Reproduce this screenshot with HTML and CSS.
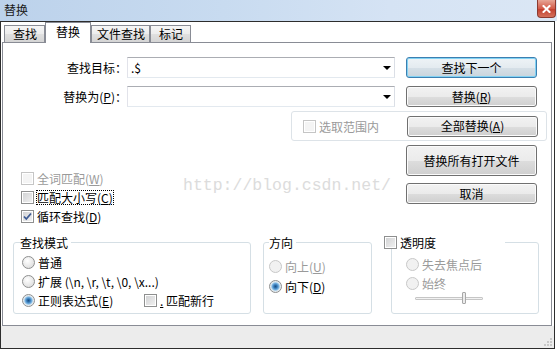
FILE: index.html
```html
<!DOCTYPE html>
<html lang="zh-CN">
<head>
    <meta charset="UTF-8">
    <meta name="viewport" content="width=device-width, initial-scale=1.0">
    <title>替换</title>
    <link rel="stylesheet" href="styles.css">
</head>
<body>
    <div class="window">
        <div class="titlebar">
            <span class="title">替换</span>
            <span class="close">
                <svg width="9" height="8" viewBox="0 0 9 8"><path d="M1.5 1 L7.5 7 M7.5 1 L1.5 7" stroke="#fff" stroke-width="2" stroke-linecap="square"/></svg>
            </span>
        </div>
        <div class="client">
            <div class="tabs">
                <div class="tab">查找</div>
                <div class="tab active">替换</div>
                <div class="tab wide">文件查找</div>
                <div class="tab">标记</div>
            </div>
            <div class="panel">
                <div class="watermark">http://blog.csdn.net/</div>

                <div class="row">
                    <label class="field-label">查找目标：</label>
                    <div class="combo"><span>.$</span><span class="arrow"></span></div>
                    <button class="btn default">查找下一个</button>
                </div>
                <div class="row last">
                    <label class="field-label">替换为(<u>P</u>)：</label>
                    <div class="combo"><span></span><span class="arrow"></span></div>
                    <button class="btn">替换(<u>R</u>)</button>
                </div>

                <div class="scope">
                    <span class="check disabled"><i class="box"></i>选取范围内</span>
                    <button class="btn">全部替换(<u>A</u>)</button>
                </div>

                <div class="middle">
                    <div class="options">
                        <div class="check disabled"><i class="box"></i>全词匹配(<u>W</u>)</div>
                        <div class="check"><i class="box"></i><span class="focus">匹配大小写(<u>C</u>)</span></div>
                        <div class="check">
                            <i class="box">
                                <svg width="11" height="11" viewBox="0 0 11 11"><path d="M2 5.5 L4.3 8 L9 2.5" fill="none" stroke="#3d5a93" stroke-width="1.8"/></svg>
                            </i>循环查找(<u>D</u>)
                        </div>
                    </div>
                    <div class="side">
                        <button class="btn tall">替换所有打开文件</button>
                        <button class="btn">取消</button>
                    </div>
                </div>

                <div class="groups">
                    <fieldset class="group mode">
                        <legend>查找模式</legend>
                        <div class="radio"><i class="dot"></i>普通</div>
                        <div class="radio"><i class="dot"></i>扩展 (\n, \r, \t, \0, \x...)</div>
                        <div class="radio-row">
                            <div class="radio regex"><i class="dot on"></i>正则表达式(<u>E</u>)</div>
                            <div class="check"><i class="box"></i><u>.</u>&nbsp;匹配新行</div>
                        </div>
                    </fieldset>
                    <fieldset class="group direction">
                        <legend>方向</legend>
                        <div class="radio disabled"><i class="dot"></i>向上(<u>U</u>)</div>
                        <div class="radio"><i class="dot on"></i>向下(<u>D</u>)</div>
                    </fieldset>
                    <fieldset class="group alpha">
                        <legend><span class="check"><i class="box"></i>透明度</span></legend>
                        <div class="radio disabled"><i class="dot"></i>失去焦点后</div>
                        <div class="radio disabled"><i class="dot"></i>始终</div>
                        <div class="slider"><span class="thumb"></span></div>
                    </fieldset>
                </div>
            </div>
            <div class="statusbar">
                <svg class="grip" width="10" height="10" viewBox="0 0 10 10">
                    <rect x="7" y="1" width="2" height="2" fill="#c8c8c8"/>
                    <rect x="4" y="4" width="2" height="2" fill="#c8c8c8"/>
                    <rect x="7" y="4" width="2" height="2" fill="#c8c8c8"/>
                    <rect x="1" y="7" width="2" height="2" fill="#c8c8c8"/>
                    <rect x="4" y="7" width="2" height="2" fill="#c8c8c8"/>
                    <rect x="7" y="7" width="2" height="2" fill="#c8c8c8"/>
                </svg>
            </div>
        </div>
    </div>
</body>
</html>
```

FILE: styles.css
```css
* {
    box-sizing: border-box;
}
body {
    margin: 0;
    background: #fff;
    font-family: "Noto Sans CJK SC", "Liberation Sans", sans-serif;
    font-size: 12px;
    color: #000;
}
u {
    text-decoration: underline;
}
.window {
    width: 557px;
    height: 351px;
}

/* title bar */
.titlebar {
    height: 21px;
    display: flex;
    justify-content: space-between;
    align-items: flex-start;
    background: linear-gradient(90deg, #bcd2eb 0%, #c8dbf0 40%, #d5e3f4 70%, #dbe7f5 100%);
}
.title {
    padding: 2px 0 0 4px;
    line-height: 16px;
    color: #1a1a1a;
}
.close {
    width: 19px;
    height: 18px;
    margin-right: 1px;
    border: 1px solid #8b3a30;
    border-top: none;
    border-radius: 0 0 4px 4px;
    background: linear-gradient(#e7a596, #d35a48 50%, #c13c2c 51%, #d4705a);
    display: flex;
    align-items: center;
    justify-content: center;
}

/* client area */
.client {
    width: 555px;
    height: 328px;
    border: 1px solid #2d2d2d;
    display: flex;
    flex-direction: column;
}
.tabs {
    display: flex;
    align-items: flex-end;
    height: 20px;
    padding-left: 3px;
}
.tab {
    height: 17px;
    padding: 0 7px 0 8px;
    line-height: 15px;
    border: 1px solid #898c95;
    border-bottom: none;
    background: linear-gradient(#f6f6f6, #ececec 50%, #e0e0e0 51%, #d4d4d4);
}
.tab.wide {
    padding: 0 4px 0 5px;
}
.tab.active {
    position: relative;
    z-index: 1;
    height: 21px;
    margin-bottom: -1px;
    padding: 0 10px;
    line-height: 18px;
    background: #fff;
}
.panel {
    position: relative;
    height: 284px;
    margin: 0 2px 0 1px;
    padding-top: 14px;
    border: 1px solid #898c95;
    background: #fff;
}
.statusbar {
    flex: 1;
    display: flex;
    justify-content: flex-end;
    align-items: flex-end;
    background: #ececec;
    padding: 0 1px 1px 0;
}
.watermark {
    position: absolute;
    left: 180px;
    top: 133px;
    font: 16.5px/19px "Liberation Mono", monospace;
    color: #dcdcdc;
    pointer-events: none;
}

/* fields */
.row {
    display: flex;
    align-items: center;
    height: 21px;
    margin-bottom: 8px;
}
.row.last {
    margin-bottom: 4px;
}
.field-label {
    width: 124px;
    text-align: right;
    line-height: 21px;
}
.combo {
    width: 268px;
    height: 21px;
    display: flex;
    align-items: center;
    justify-content: space-between;
    padding: 0 3px 0 3px;
    border: 1px solid;
    border-color: #abadb3 #dbdfe6 #e3e9ef #e2e3ea;
    line-height: 19px;
}
.arrow {
    width: 0;
    height: 0;
    border-left: 4px solid transparent;
    border-right: 4px solid transparent;
    border-top: 4px solid #000;
}

/* buttons */
.btn {
    width: 131px;
    height: 21px;
    margin-left: 11px;
    padding: 0;
    font: 12px/1 "Noto Sans CJK SC", "Liberation Sans", sans-serif;
    color: #000;
    border: 1px solid #707070;
    border-radius: 3px;
    background: linear-gradient(#f2f2f2, #ebebeb 50%, #dddddd 51%, #cfcfcf);
    box-shadow: inset 0 0 0 1px #fbfbfb;
}
.btn.default {
    border-color: #3c7fb1;
    background: linear-gradient(#eef3f6, #e4ebf0 50%, #d6e0e7 51%, #c9d4dc);
    box-shadow: inset 0 0 0 1px #82d2f3;
}
.btn.tall {
    height: 31px;
}

/* scope box */
.scope {
    display: flex;
    align-items: center;
    width: 256px;
    height: 30px;
    margin-left: 288px;
    padding: 0 8px 0 11px;
    border: 1px solid #dde3e8;
    border-radius: 3px;
}
.scope .btn {
    margin-left: auto;
}

/* check boxes and radios */
.check, .radio {
    display: flex;
    align-items: center;
    height: 19px;
    white-space: nowrap;
}
.disabled {
    color: #9a9a9a;
}
.box {
    flex: none;
    width: 13px;
    height: 13px;
    margin-right: 3px;
    display: flex;
    align-items: center;
    justify-content: center;
    border: 1px solid #8e8f8f;
    background: linear-gradient(135deg, #cfd0d2, #f3f3f3);
    box-shadow: inset 0 0 0 1px #fff;
}
.disabled .box {
    border-color: #c5c5c5;
    background: #f4f4f4;
}
.dot {
    flex: none;
    width: 13px;
    height: 13px;
    margin-right: 3px;
    border-radius: 50%;
    border: 1px solid #8e8f8f;
    background: radial-gradient(circle at 40% 35%, #fff, #d6d6d6);
}
.dot.on {
    background: radial-gradient(circle, #1d4f82 0, #2f72b0 1.5px, #7db8e6 3.5px, #d8e4ec 4.5px, #f6f6f6 6px);
}
.disabled .dot {
    border-color: #c8c8c8;
    background: #f1f1f1;
}
.focus {
    outline: 1px dotted #000;
    outline-offset: 0;
    line-height: 13px;
}

/* middle area */
.middle {
    display: flex;
    height: 85px;
}
.options {
    width: 403px;
    padding: 28px 0 0 18px;
}
.side {
    display: flex;
    flex-direction: column;
    gap: 7px;
    padding-top: 4px;
}
.side .btn {
    margin-left: 0;
}

/* group boxes */
.groups {
    display: flex;
    align-items: flex-start;
    margin: 10px 0 0 10px;
}
.group {
    margin: 0;
    height: 78px;
    padding: 4px 0 0 8px;
    border: 1px solid #d5dfe5;
    border-radius: 3px;
}
.group legend {
    padding: 0 3px 0 0;
    line-height: 13px;
}
.mode {
    width: 238px;
}
.mode legend {
    margin-left: -2px;
}
.radio-row {
    display: flex;
}
.regex {
    width: 122px;
}
.direction {
    width: 109px;
    margin-left: 12px;
    padding: 7px 0 0 5px;
}
.direction .radio {
    height: 20px;
}
.alpha {
    width: 148px;
    margin-left: 19px;
    padding: 6px 0 0 14px;
}
.alpha legend {
    width: 121px;
    margin-left: -22px;
}
.alpha legend .check {
    height: 13px;
}
.alpha .radio {
    height: 19px;
}
.slider {
    position: relative;
    width: 68px;
    height: 3px;
    margin: 4px 0 0 9px;
    border: 1px solid #c6c6c6;
    border-radius: 1px;
    background: #f2f2f2;
}
.thumb {
    position: absolute;
    left: 46px;
    top: -6px;
    width: 4px;
    height: 12px;
    border: 1px solid #a8a8a8;
    border-radius: 1px;
    background: #ececec;
}
```
